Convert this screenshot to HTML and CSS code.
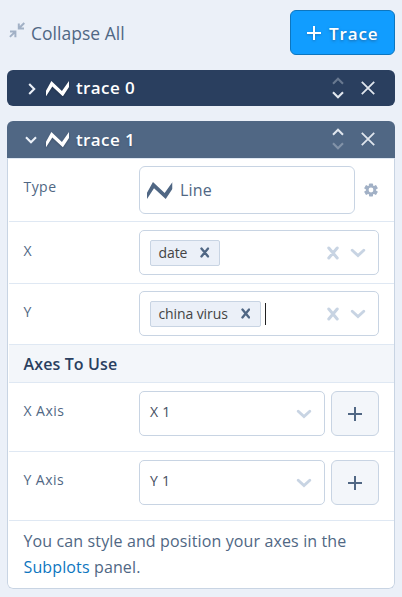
FILE: index.html
```html
<!DOCTYPE html>
<html lang="en">
<head>
<meta charset="utf-8">
<title>Traces</title>
<link rel="stylesheet" href="styles.css">
</head>
<body>
<svg class="defs" width="0" height="0">
  <symbol id="line" viewBox="0 0 24 16"><path d="M0 10.2 5.6 0 16.6 10.4 24 0V6.3L17.6 16 6.6 5.8 0 16Z" fill="currentColor"/></symbol>
  <symbol id="chevron" viewBox="0 0 16 10"><path d="M2.2 2.2 8 7.6 13.8 2.2" fill="none" stroke="currentColor" stroke-width="2.9" stroke-linecap="round"/></symbol>
  <symbol id="thin" viewBox="0 0 12 8"><path d="M1 1.2 6 6.2 11 1.2" fill="none" stroke="currentColor" stroke-width="2.1"/></symbol>
  <symbol id="cross" viewBox="0 0 14 14"><path d="M.8.8 13.2 13.2M13.2.8.8 13.2" fill="none" stroke="currentColor" stroke-width="1.8"/></symbol>
  <symbol id="clear" viewBox="0 0 12 14"><path d="M1.8 2 10.2 12M10.2 2 1.8 12" fill="none" stroke="currentColor" stroke-width="3" stroke-linecap="round"/></symbol>
  <symbol id="plus" viewBox="0 0 14 14"><path d="M7 0V14M0 7H14" fill="none" stroke="currentColor" stroke-width="2"/></symbol>
</svg>
<header class="toolbar">
  <div class="collapse">
    <svg class="collapse-icon" viewBox="0 0 16 16"><path d="M9.8 1.4V6.4H15M10 6.2 15.3 1M1 9.6h5.4V15.2M6.2 9.8 .9 14.9" fill="none" stroke="currentColor" stroke-width="2"/></svg>
    <span>Collapse All</span>
  </div>
  <button class="add"><svg class="plus"><use href="#plus"/></svg><span>Trace</span></button>
</header>
<section class="fold closed">
  <div class="head">
    <svg class="toggle right"><use href="#thin"/></svg>
    <svg class="line"><use href="#line"/></svg>
    <span class="name">trace 0</span>
    <div class="movers"><svg class="up dim"><use href="#thin"/></svg><svg><use href="#thin"/></svg></div>
    <svg class="close"><use href="#cross"/></svg>
  </div>
</section>
<section class="fold open">
  <div class="head">
    <svg class="toggle"><use href="#thin"/></svg>
    <svg class="line"><use href="#line"/></svg>
    <span class="name">trace 1</span>
    <div class="movers"><svg class="up"><use href="#thin"/></svg><svg class="dim"><use href="#thin"/></svg></div>
    <svg class="close"><use href="#cross"/></svg>
  </div>
  <div class="body">
    <div class="row type">
      <label>Type</label>
      <div class="box type-box"><svg class="line big"><use href="#line"/></svg><span>Line</span></div>
      <svg class="gear" viewBox="0 0 14 14"><g fill="currentColor"><rect x="5" y=".6" width="4" height="12.8" rx=".7"/><rect x="5" y=".1" width="4" height="13.8" rx=".7" transform="rotate(60 7 7)"/><rect x="5" y=".1" width="4" height="13.8" rx=".7" transform="rotate(120 7 7)"/><circle cx="7" cy="7" r="5"/></g><circle cx="7" cy="7" r="2.4" fill="#fff"/></svg>
    </div>
    <div class="row x">
      <label>X</label>
      <div class="box"><span class="tag">date<svg><use href="#clear"/></svg></span><svg class="clear"><use href="#clear"/></svg><svg class="chevron"><use href="#chevron"/></svg></div>
    </div>
    <div class="row y">
      <label>Y</label>
      <div class="box"><span class="tag">china virus<svg><use href="#clear"/></svg></span><i class="caret"></i><svg class="clear"><use href="#clear"/></svg><svg class="chevron"><use href="#chevron"/></svg></div>
    </div>
    <h2>Axes To Use</h2>
    <div class="row axis">
      <label>X Axis</label>
      <div class="box"><span class="value">X 1</span><svg class="chevron"><use href="#chevron"/></svg></div>
      <button class="mini"><svg class="plus"><use href="#plus"/></svg></button>
    </div>
    <div class="row axis">
      <label>Y Axis</label>
      <div class="box"><span class="value">Y 1</span><svg class="chevron"><use href="#chevron"/></svg></div>
      <button class="mini"><svg class="plus"><use href="#plus"/></svg></button>
    </div>
    <p>You can style and position your axes in the <a>Subplots</a> panel.</p>
  </div>
</section>
</body>
</html>
```
FILE: styles.css
```css
* { box-sizing: border-box; }
body {
  margin: 0;
  padding: 10px 7px 8px;
  height: 597px;
  overflow: hidden;
  background: #ebf0f8;
  color: #506784;
  font-family: "Open Sans", sans-serif;
  font-size: 14px;
}
svg { display: block; flex: none; }
.defs { position: absolute; }
button { font: inherit; padding: 0; }
.toolbar { display: flex; justify-content: space-between; height: 45px; margin-bottom: 15px; }
.collapse { display: flex; padding: 12px 0 0 2px; font-size: 17.5px; line-height: 23px; letter-spacing: .02px; }
.collapse-icon { width: 16px; height: 16px; margin-right: 6px; color: #a2b1c6; }
.add {
  display: flex;
  align-items: center;
  width: 105px;
  padding: 1px 0 0 16px;
  border: 1px solid #0d76bf;
  border-radius: 6px;
  background: #119dff;
  color: #fff;
  font-size: 17px;
  font-weight: 600;
  letter-spacing: .9px;
  text-shadow: 0 1px 3px rgba(42, 63, 95, .6);
}
.plus { width: 14px; height: 14px; }
.add .plus { margin-right: 8px; filter: drop-shadow(0 1px 1px rgba(42, 63, 95, .35)); }
.fold { border-radius: 6px; overflow: hidden; }
.head { display: flex; align-items: center; height: 36px; padding: 0 20.5px 0 18px; color: #fff; }
.closed { margin-bottom: 15px; }
.closed .head { background: #2a3f5f; }
.open .head { height: 37px; background: #506784; }
.toggle { width: 12px; height: 8px; margin: 1px 9px 0 0; color: #ebf0f8; }
.right { transform: translateX(1px) rotate(-90deg); }
.line { width: 23px; height: 15.4px; margin-top: 1px; filter: drop-shadow(0 1px 1px rgba(0, 0, 0, .2)); }
.name { margin: -1px 0 0 7px; font-size: 17px; font-weight: 600; letter-spacing: .4px; text-shadow: 0 1px 2px rgba(42, 63, 95, .5); }
.movers { display: flex; flex-direction: column; gap: 6px; margin: -1px 16.5px 0 auto; color: #dfe5ed; }
.movers svg { width: 12px; height: 8px; }
.up { transform: rotate(180deg); }
.dim { opacity: .35; }
.close { width: 14px; height: 14px; margin-top: -1px; color: #dfe5ed; }
.body {
  height: 431px;
  padding-left: 1px;
  border: 1px solid #c8d4e3;
  border-top-color: #dfe8f3;
  border-radius: 0 0 6px 6px;
  background: #fff;
}
.row { display: flex; border-bottom: 1px solid #dfe8f3; padding: 8px 15px 0 14px; }
.row label { width: 116px; padding-top: 11px; color: #506784; line-height: 20px; letter-spacing: .45px; text-indent: .5px; }
.type { height: 63px; padding-top: 7px; }
.x { height: 62px; }
.y { height: 61px; padding-top: 7px; }
.axis { height: 69px; }
.axis label { padding-top: 10px; }
.box { display: flex; align-items: center; flex: 1; height: 45px; padding: 0 12.5px 0 10px; border: 1px solid #c8d4e3; border-radius: 5px; }
.type-box { flex: none; width: 216px; height: 48px; padding-left: 7px; border-radius: 6px; font-size: 16px; letter-spacing: .15px; }
.big { width: 25.5px; height: 17px; margin: 0 7.5px 0 0; filter: none; }
.gear { width: 14px; height: 14px; margin: 17px 0 0 9px; color: #a2b1c6; }
.tag { display: flex; align-items: center; height: 26px; padding: 0 9.5px 1px 7.5px; border: 1px solid #c8d4e3; border-radius: 2px; background: #ebf0f8; color: #444; letter-spacing: -.1px; }
.tag svg { width: 9.5px; height: 11px; margin: 1px 0 0 13px; color: #506784; }
.caret { width: 1px; height: 22px; margin-left: 4px; background: #222; }
.clear { width: 12px; height: 14px; margin: 0 11px 0 auto; color: #c8d4e3; }
.chevron { width: 16px; height: 10px; margin-top: 1px; color: #c8d4e3; }
.value { margin-right: auto; padding-bottom: 4px; color: #444e60; letter-spacing: .3px; }
.mini { display: flex; align-items: center; justify-content: center; width: 48px; height: 45px; margin-left: 6px; padding-top: 1px; border: 1px solid #c8d4e3; border-radius: 6px; background: #f3f6fa; color: #506784; }
h2 { margin: 0; height: 38px; padding: 0 14.5px; border-bottom: 1px solid #dfe8f3; background: #f3f6fa; color: #2a3f5f; font-size: 16px; font-weight: 600; line-height: 38px; letter-spacing: .12px; }
p { margin: 0; padding: 7px 14.5px; font-size: 16px; line-height: 26px; letter-spacing: .13px; }
a { color: #0d76bf; }
```
